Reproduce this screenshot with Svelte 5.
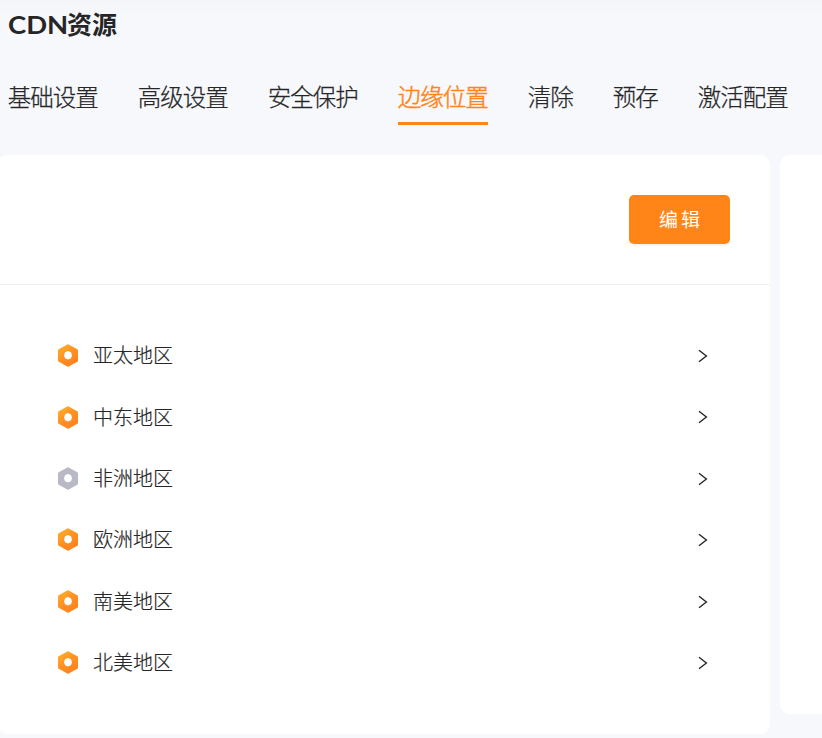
<script>
  const tabs = ['基础设置', '高级设置', '安全保护', '边缘位置', '清除', '预存', '激活配置'];
  const active = '边缘位置';
  const regions = [
    { name: '亚太地区', on: true },
    { name: '中东地区', on: true },
    { name: '非洲地区', on: false },
    { name: '欧洲地区', on: true },
    { name: '南美地区', on: true },
    { name: '北美地区', on: true }
  ];
</script>

<div class="page">
  <h1><span class="latin">CDN</span>资源</h1>
  <nav>
    {#each tabs as tab}
      <a class:active={tab === active}>{tab}</a>
    {/each}
  </nav>
  <main>
    <section class="card">
      <header><button>编辑</button></header>
      <ul>
        {#each regions as region}
          <li>
            <svg class="hex" viewBox="0 0 20 23" width="20" height="23">
              <defs>
                <linearGradient id="amber" x1="0" y1="0" x2="0.7" y2="1">
                  <stop offset="0" stop-color="#ffb62c" />
                  <stop offset="0.5" stop-color="#ff9324" />
                  <stop offset="1" stop-color="#ff7f1c" />
                </linearGradient>
              </defs>
              <path
                d="M9.3.4Q10 0 10.7.4L19.3 5.2Q20 5.6 20 6.4V16.6Q20 17.4 19.3 17.8L10.7 22.6Q10 23 9.3 22.6L.7 17.8Q0 17.4 0 16.6V6.4Q0 5.6.7 5.2Z"
                fill={region.on ? 'url(#amber)' : '#b9b8c5'}
              />
              <path d="M10 6.9 13 8.3 14 11.2 13 14.2 10 15.6 7 14.2 6 11.2 7 8.3Z" fill="#fff" />
            </svg>
            <span class="name">{region.name}</span>
            <svg class="chevron" viewBox="0 0 10 14" width="10" height="14">
              <path d="M1 1.2 8.4 7 1 12.8" fill="none" stroke="#262626" stroke-width="1.4" />
            </svg>
          </li>
        {/each}
      </ul>
    </section>
    <aside class="card"></aside>
  </main>
</div>

<style>
  :global(body) {
    margin: 0;
    background: #f7f8fc;
  }
  .page {
    height: 738px;
    overflow: hidden;
    box-sizing: border-box;
    background: linear-gradient(#f4f5f9, #f7f8fc 16px);
    font-family: 'Noto Sans CJK SC', sans-serif;
    color: #262626;
  }
  h1 {
    margin: 0;
    padding: 4px 0 0 8px;
    height: 46px;
    font-size: 25px;
    line-height: 38px;
    font-weight: 700;
    white-space: nowrap;
  }
  .latin {
    display: inline-block;
    width: 59px;
    font-family: Lato, sans-serif;
    font-size: 25.2px;
    transform: scaleX(1.09);
    transform-origin: left;
  }
  nav {
    display: flex;
    gap: 40px;
    height: 75px;
    margin-left: 7.8px;
    padding-top: 28px;
    box-sizing: border-box;
  }
  nav a {
    height: 47px;
    box-sizing: border-box;
    font-size: 23.5px;
    letter-spacing: -1px;
    line-height: 37px;
    font-weight: 300;
    white-space: nowrap;
    -webkit-text-stroke: 0.25px currentColor;
  }
  nav a.active {
    color: #ff8519;
    border-bottom: 3px solid #ff8519;
    -webkit-text-stroke-width: 0.5px;
  }
  main {
    display: flex;
    align-items: flex-start;
    gap: 10px;
    margin: 30px 0 0 -2px;
  }
  .card {
    background: #fff;
    border-radius: 10px;
  }
  section {
    width: 772px;
    height: 579px;
    flex: none;
  }
  aside {
    width: 60px;
    height: 559px;
    flex: none;
  }
  header {
    display: flex;
    justify-content: flex-end;
    box-sizing: border-box;
    height: 130px;
    padding: 40px 40px 0 0;
    border-bottom: 1px solid #f0f0f0;
  }
  button {
    width: 101px;
    height: 49px;
    padding: 0 0 2px 3px;
    border: 0;
    border-radius: 5px;
    background: #ff8519;
    box-shadow: 0 2px 0 rgba(0, 0, 0, 0.045);
    color: #fff;
    font: 400 19px/47px 'Noto Sans CJK SC', sans-serif;
    letter-spacing: 3px;
  }
  ul {
    list-style: none;
    margin: 0;
    padding: 40px 62px 0 60px;
  }
  li {
    display: flex;
    align-items: center;
    height: 61.4px;
  }
  .chevron {
    margin-top: 0.6px;
  }
  .name {
    flex: 1;
    margin-left: 15px;
    padding-bottom: 1px;
    font-size: 20px;
    line-height: 30px;
    font-weight: 300;
    -webkit-text-stroke: 0.2px currentColor;
  }
</style>
